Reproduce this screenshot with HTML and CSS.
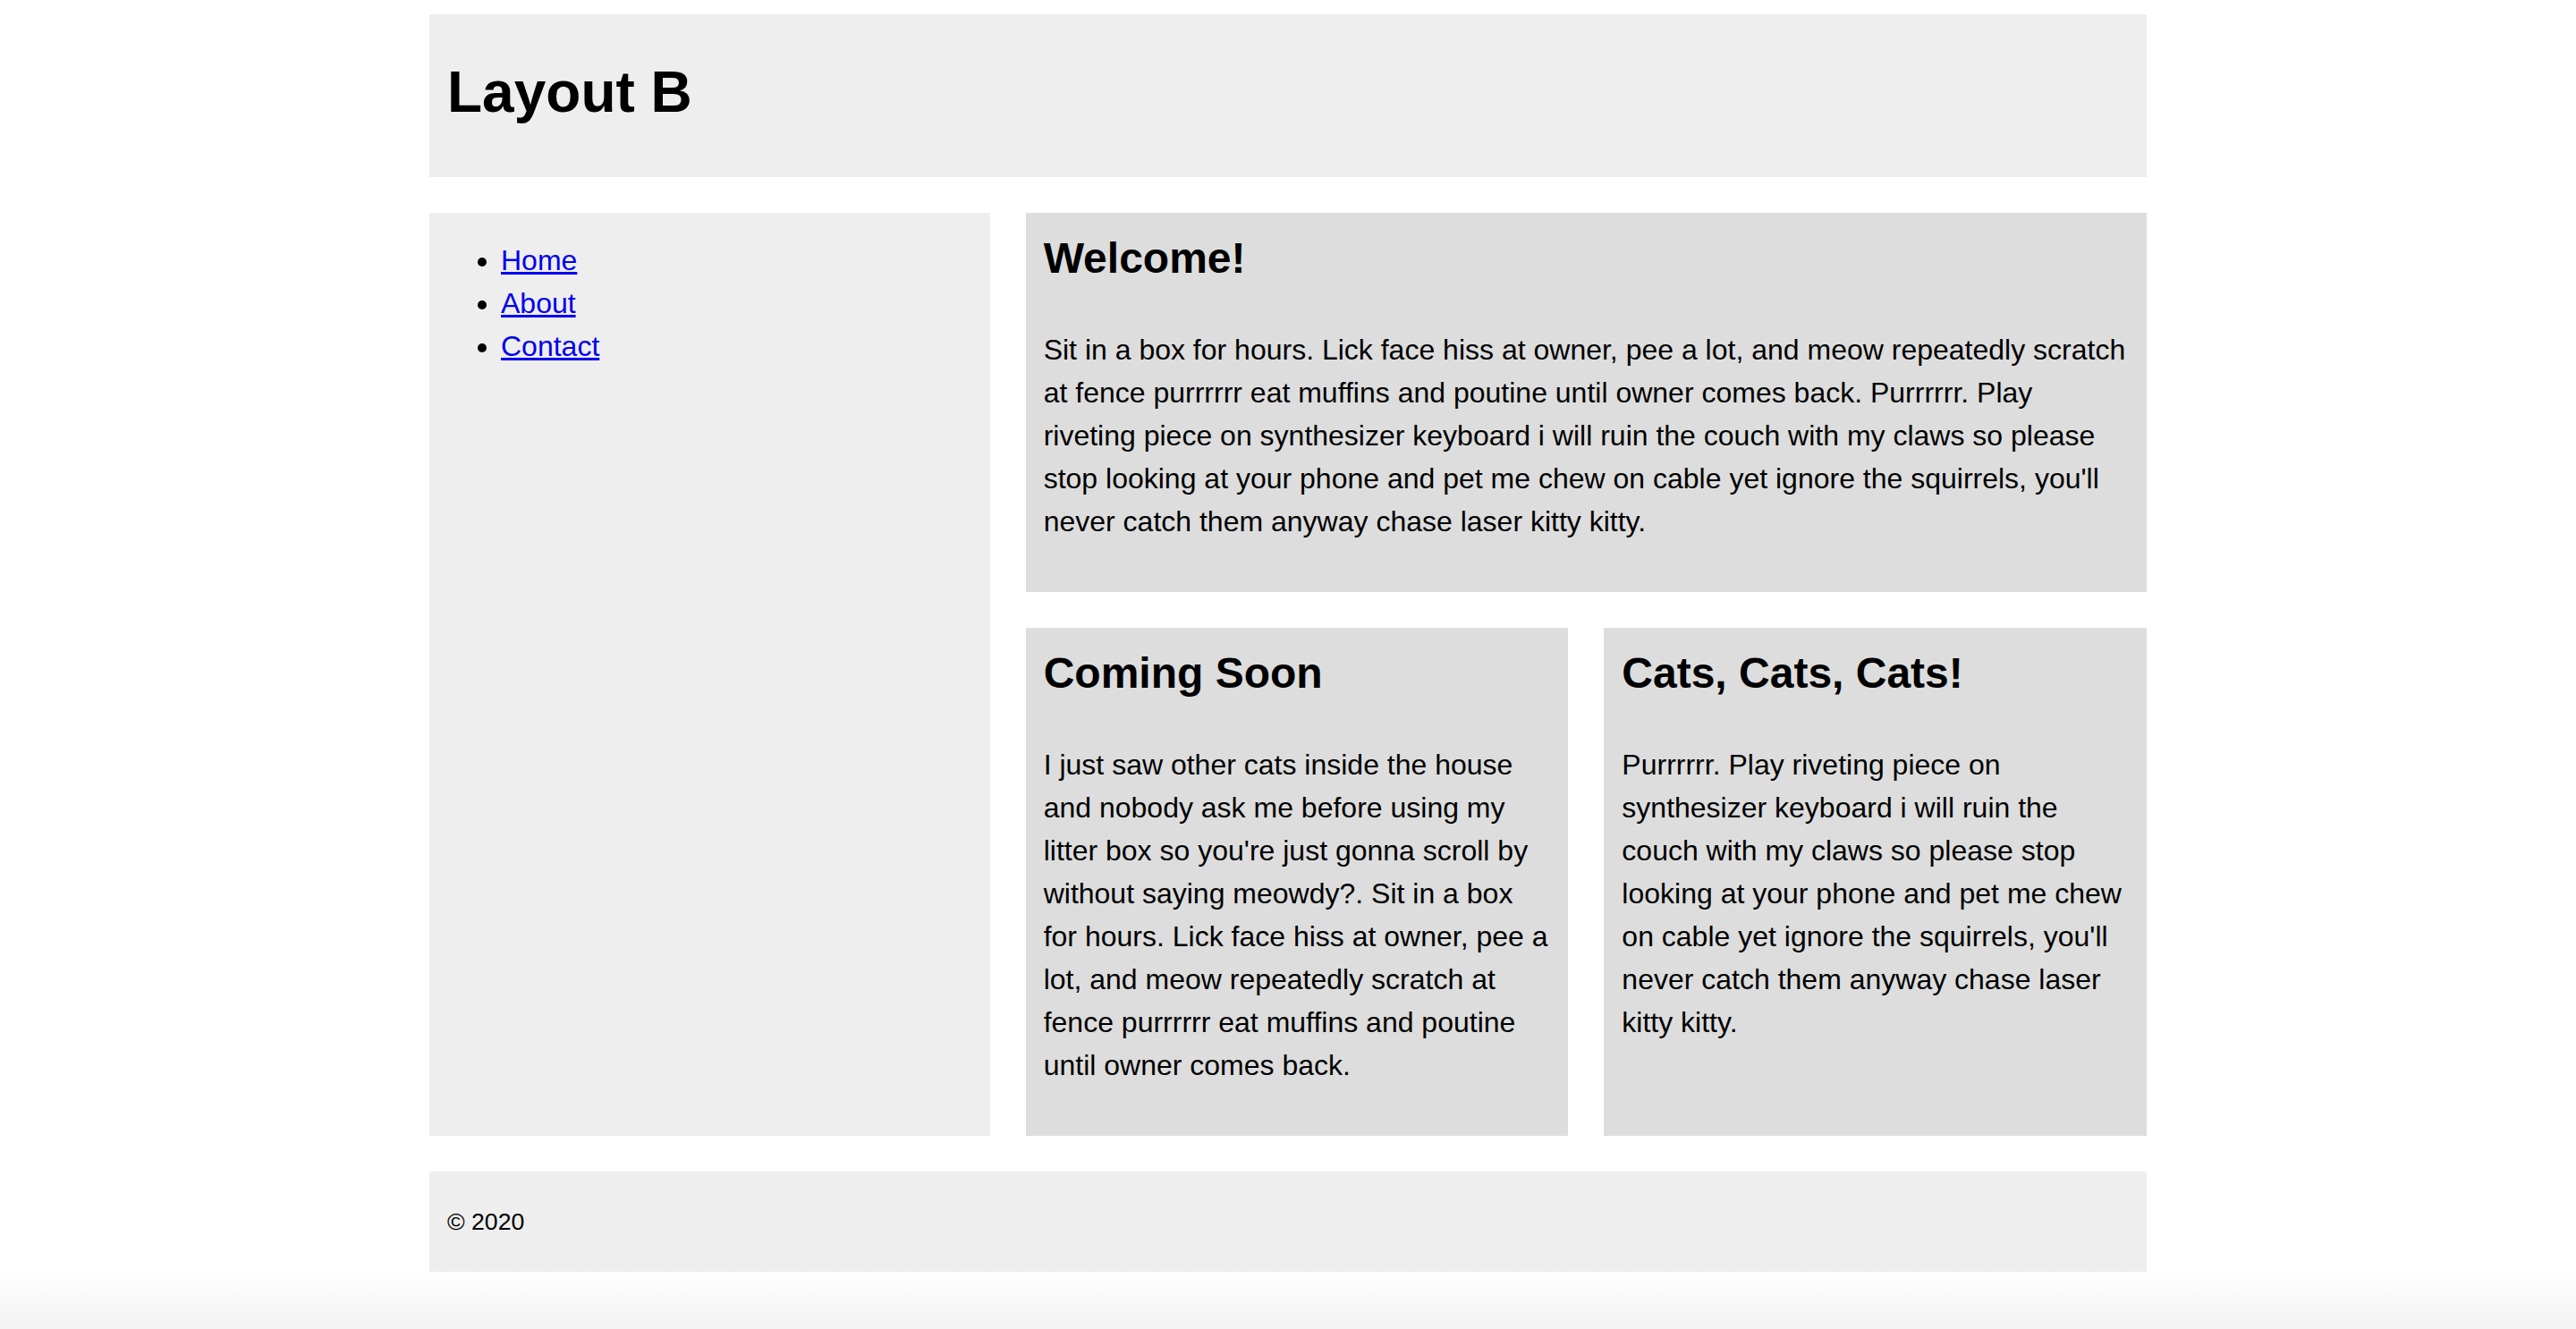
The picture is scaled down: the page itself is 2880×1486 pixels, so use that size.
FILE: index.html
```html
<!DOCTYPE html>
<html lang="en">
<head>
<meta charset="utf-8">
<title>Layout B</title>
<link rel="stylesheet" href="styles.css">
</head>
<body>
<div class="page">
  <header class="site-header">
    <h1>Layout B</h1>
  </header>
  <nav class="sidebar">
    <ul>
      <li><a href="#">Home</a></li>
      <li><a href="#">About</a></li>
      <li><a href="#">Contact</a></li>
    </ul>
  </nav>
  <main class="content">
    <section class="card card-wide">
      <h2>Welcome!</h2>
      <p>Sit in a box for hours. Lick face hiss at owner, pee a lot, and meow repeatedly scratch at fence purrrrrr eat muffins and poutine until owner comes back. Purrrrrr. Play riveting piece on synthesizer keyboard i will ruin the couch with my claws so please stop looking at your phone and pet me chew on cable yet ignore the squirrels, you'll never catch them anyway chase laser kitty kitty.</p>
    </section>
    <section class="card">
      <h2>Coming Soon</h2>
      <p>I just saw other cats inside the house and nobody ask me before using my litter box so you're just gonna scroll by without saying meowdy?. Sit in a box for hours. Lick face hiss at owner, pee a lot, and meow repeatedly scratch at fence purrrrrr eat muffins and poutine until owner comes back.</p>
    </section>
    <section class="card">
      <h2>Cats, Cats, Cats!</h2>
      <p>Purrrrrr. Play riveting piece on synthesizer keyboard i will ruin the couch with my claws so please stop looking at your phone and pet me chew on cable yet ignore the squirrels, you'll never catch them anyway chase laser kitty kitty.</p>
    </section>
  </main>
  <footer class="site-footer">
    <p><small>&copy; 2020</small></p>
  </footer>
</div>
</body>
</html>
```
FILE: styles.css
```css
html {
  background: #ffffff linear-gradient(to bottom, #ffffff 0, #ffffff calc(100% - 66px), #f3f3f3 100%) fixed;
}

body {
  margin: 16px;
  font-family: "Liberation Sans", Arial, Helvetica, sans-serif;
  font-size: 32px;
  line-height: 1.5;
  color: #000;
}

.page {
  width: 1920px;
  margin: 0 auto;
  display: grid;
  grid-template-columns: 1fr 2fr;
  gap: 40px;
}

.site-header {
  grid-column: 1 / -1;
  background: #eeeeee;
  padding: 0 20px;
}

.site-header h1 {
  font-size: 64px;
  margin: 39px 0 47px;
}

.sidebar {
  background: #eeeeee;
}

.sidebar ul {
  margin: 29px 0 31px;
  padding-left: 80px;
}

.sidebar a {
  color: #0000ee;
}

.content {
  display: grid;
  grid-template-columns: 1fr 1fr;
  gap: 40px;
}

.card {
  background: #dddddd;
  padding: 20px;
}

.card-wide {
  grid-column: 1 / -1;
}

.card h2 {
  font-size: 48px;
  margin: -5px 0 42px;
}

.card p {
  margin: 0 0 35px;
}

.site-footer {
  grid-column: 1 / -1;
  background: #eeeeee;
  padding: 0 20px;
}

.site-footer p {
  margin: 30px 0 34px;
}

.site-footer small {
  font-size: 26.67px;
}
```
